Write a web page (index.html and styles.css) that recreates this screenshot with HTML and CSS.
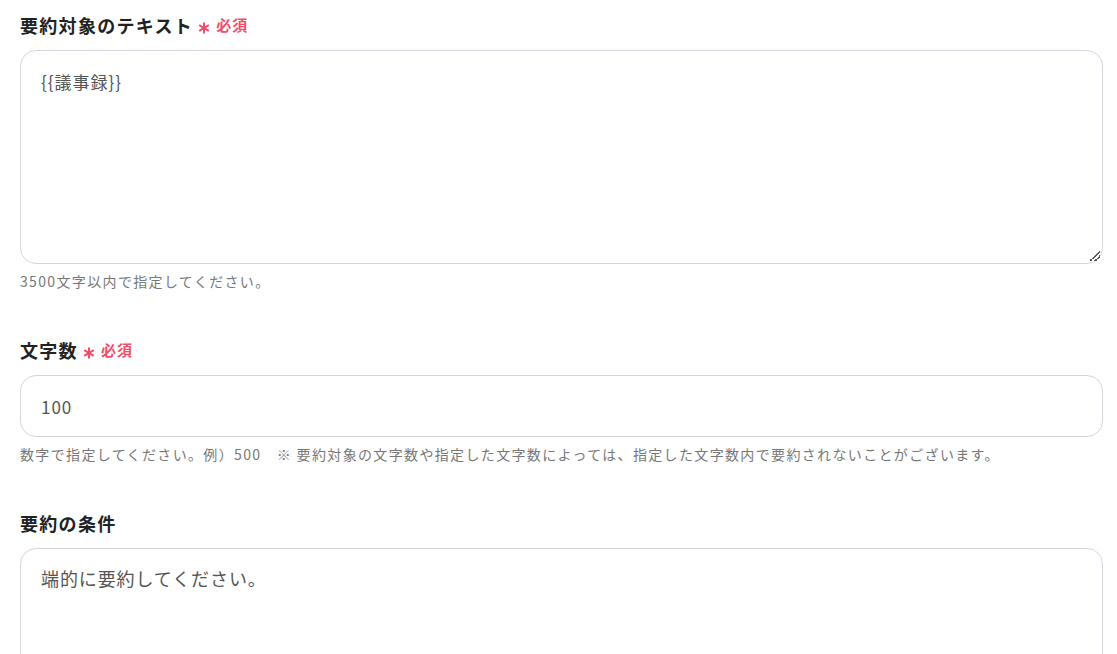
FILE: index.html
```html
<!DOCTYPE html>
<html lang="ja">
<head>
<meta charset="utf-8">
<link rel="stylesheet" href="styles.css">
</head>
<body>
<main class="form">
  <section class="field">
    <div class="label">要約対象のテキスト<span class="req"><svg class="star" viewBox="0 0 12 12" width="12" height="12"><path d="M6 0.5V11.5M1.2 3.2L10.8 8.8M10.8 3.2L1.2 8.8" stroke="#f24d67" stroke-width="2" fill="none"/></svg>必須</span></div>
    <div class="box textarea"><span class="value">{{議事録}}</span><span class="grip"></span></div>
    <p class="help">3500文字以内で指定してください。</p>
  </section>
  <section class="field">
    <div class="label">文字数<span class="req"><svg class="star" viewBox="0 0 12 12" width="12" height="12"><path d="M6 0.5V11.5M1.2 3.2L10.8 8.8M10.8 3.2L1.2 8.8" stroke="#f24d67" stroke-width="2" fill="none"/></svg>必須</span></div>
    <div class="box input"><span class="value">100</span></div>
    <p class="help">数字で指定してください。例）500　※ 要約対象の文字数や指定した文字数によっては、指定した文字数内で要約されないことがございます。</p>
  </section>
  <section class="field">
    <div class="label">要約の条件</div>
    <div class="box textarea tall"><span class="value big">端的に要約してください。</span></div>
  </section>
</main>
</body>
</html>
```
FILE: styles.css
```css
* { box-sizing: border-box; }
html, body { margin: 0; padding: 0; background: #fff; }
body {
  font-family: "Noto Sans CJK JP", "Noto Sans", sans-serif;
  color: #333;
  overflow: hidden;
  height: 654px;
}
.form { padding: 12px 14px 0 20px; display: flex; flex-direction: column; gap: 46px; }
.field { display: flex; flex-direction: column; }
.label {
  font-size: 18px;
  font-weight: 700;
  color: #222;
  line-height: 26px;
  display: flex;
  align-items: center;
  letter-spacing: 1.3px;
  margin-bottom: 12px;
}
.req { color: #f24d67; font-size: 15px; display: flex; align-items: center; margin-left: 5px; letter-spacing: 1px; }
.star { margin-right: 6px; position: relative; top: 3px; flex: none; }
.box {
  border: 1px solid #d3d6dc;
  border-radius: 16px;
  background: #fff;
  color: #555;
  position: relative;
}
.textarea { height: 214px; padding: 18px 20px; }
.tall { height: 200px; padding-top: 16px; }
.input { height: 62px; padding: 0 20px; display: flex; align-items: center; }
.value { font-size: 17px; letter-spacing: 1px; }
.big { font-size: 18px; letter-spacing: 0.9px; }
.grip {
  position: absolute; right: 2px; bottom: 2px; width: 10px; height: 10px;
  background: linear-gradient(135deg, transparent 45%, #555 45%, #555 55%, transparent 55%, transparent 70%, #555 70%, #555 80%, transparent 80%);
}
.help { margin: 7px 0 0; font-size: 14px; color: #777; letter-spacing: 1.35px; line-height: 20px; }
```
